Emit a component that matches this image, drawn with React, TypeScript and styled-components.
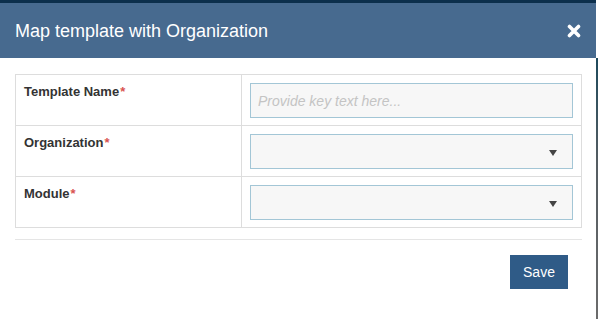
import React from 'react';
import styled, { createGlobalStyle } from 'styled-components';

const GlobalStyle = createGlobalStyle`
  html, body {
    margin: 0;
    padding: 0;
    background: #ffffff;
    font-family: "Liberation Sans", Arial, sans-serif;
  }
  * {
    box-sizing: border-box;
  }
`;

const Page = styled.div`
  display: flex;
  width: 598px;
  height: 319px;
  overflow: hidden;
`;

const Modal = styled.div`
  flex: 1;
  display: flex;
  flex-direction: column;
  background: #ffffff;
`;

const EdgeStrip = styled.div`
  width: 2px;
  margin-top: 58px;
  background: linear-gradient(180deg, #1e4a5c 0%, #555d62 40%, #6b6b6b 100%);
`;

const TopStrip = styled.div`
  height: 3px;
  background: #0c2f4c;
`;

const Header = styled.div`
  height: 55px;
  display: flex;
  align-items: center;
  justify-content: space-between;
  padding: 0 14px 0 15px;
  background: #476a8f;
  color: #ffffff;
`;

const Title = styled.h4`
  margin: 0;
  font-size: 18px;
  font-weight: normal;
  line-height: 1;
  padding-top: 1px;
`;

const CloseButton = styled.button`
  border: 0;
  background: transparent;
  padding: 0;
  width: 16px;
  height: 16px;
  display: flex;
  align-items: center;
  justify-content: center;
  cursor: pointer;
`;

const Body = styled.div`
  padding: 16px 14px 0 15px;
`;

const Table = styled.table`
  width: 567px;
  border-collapse: collapse;
  border: 1px solid #dddddd;
`;

const Row = styled.tr`
  height: 51px;
`;

const LabelCell = styled.td`
  width: 226px;
  border: 1px solid #dddddd;
  padding: 8px 8px;
  vertical-align: top;
  font-size: 13px;
  line-height: 18px;
  font-weight: bold;
  color: #333333;
`;

const FieldCell = styled.td`
  border: 1px solid #dddddd;
  padding: 7px 8px 7px 8px;
  vertical-align: top;
`;

const Required = styled.span`
  color: #d9534f;
  font-weight: bold;
  margin-left: 1px;
`;

const TextInput = styled.input`
  display: block;
  width: 100%;
  height: 35px;
  margin-top: 1px;
  border: 1px solid #a3c6d6;
  background: #f7f7f7;
  padding: 0 7px;
  font-family: "Liberation Sans", Arial, sans-serif;
  font-size: 14px;
  color: #555555;
  outline: none;

  &::placeholder {
    color: #c4c4c4;
    font-style: italic;
  }
`;

const SelectBox = styled.div`
  display: flex;
  align-items: center;
  justify-content: flex-end;
  width: 100%;
  height: 35px;
  margin-top: 1px;
  border: 1px solid #a3c6d6;
  background: #f7f7f7;
  padding-right: 15px;
`;

const Caret = styled.span`
  width: 0;
  height: 0;
  border-left: 4px solid transparent;
  border-right: 4px solid transparent;
  border-top: 6px solid #444444;
  margin-top: 2px;
`;

const Divider = styled.hr`
  width: 567px;
  margin: 11px 0 0 0;
  border: 0;
  border-top: 1px solid #e5e5e5;
`;

const Footer = styled.div`
  display: flex;
  justify-content: flex-end;
  width: 567px;
  padding: 15px 14px 0 0;
`;

const SaveButton = styled.button`
  width: 58px;
  height: 34px;
  border: 0;
  background: #2f5b87;
  color: #ffffff;
  font-family: "Liberation Sans", Arial, sans-serif;
  font-size: 14px;
  cursor: pointer;
`;

const fields = [
  { label: 'Template Name', kind: 'text' },
  { label: 'Organization', kind: 'select' },
  { label: 'Module', kind: 'select' },
];

const App = () => {
  return (
    <>
      <GlobalStyle />
      <Page>
        <Modal>
          <TopStrip />
          <Header>
            <Title>Map template with Organization</Title>
            <CloseButton aria-label="Close">
              <svg width="14" height="14" viewBox="0 0 14 14">
                <path
                  d="M2.5 2.5 L11.5 11.5 M11.5 2.5 L2.5 11.5"
                  stroke="#ffffff"
                  strokeWidth="3.6"
                  strokeLinecap="round"
                />
              </svg>
            </CloseButton>
          </Header>
          <Body>
            <Table>
              <tbody>
                {fields.map((f) => (
                  <Row key={f.label}>
                    <LabelCell>
                      {f.label}
                      <Required>*</Required>
                    </LabelCell>
                    <FieldCell>
                      {f.kind === 'text' ? (
                        <TextInput placeholder="Provide key text here..." />
                      ) : (
                        <SelectBox>
                          <Caret />
                        </SelectBox>
                      )}
                    </FieldCell>
                  </Row>
                ))}
              </tbody>
            </Table>
            <Divider />
            <Footer>
              <SaveButton>Save</SaveButton>
            </Footer>
          </Body>
        </Modal>
        <EdgeStrip />
      </Page>
    </>
  );
};

export default App;
